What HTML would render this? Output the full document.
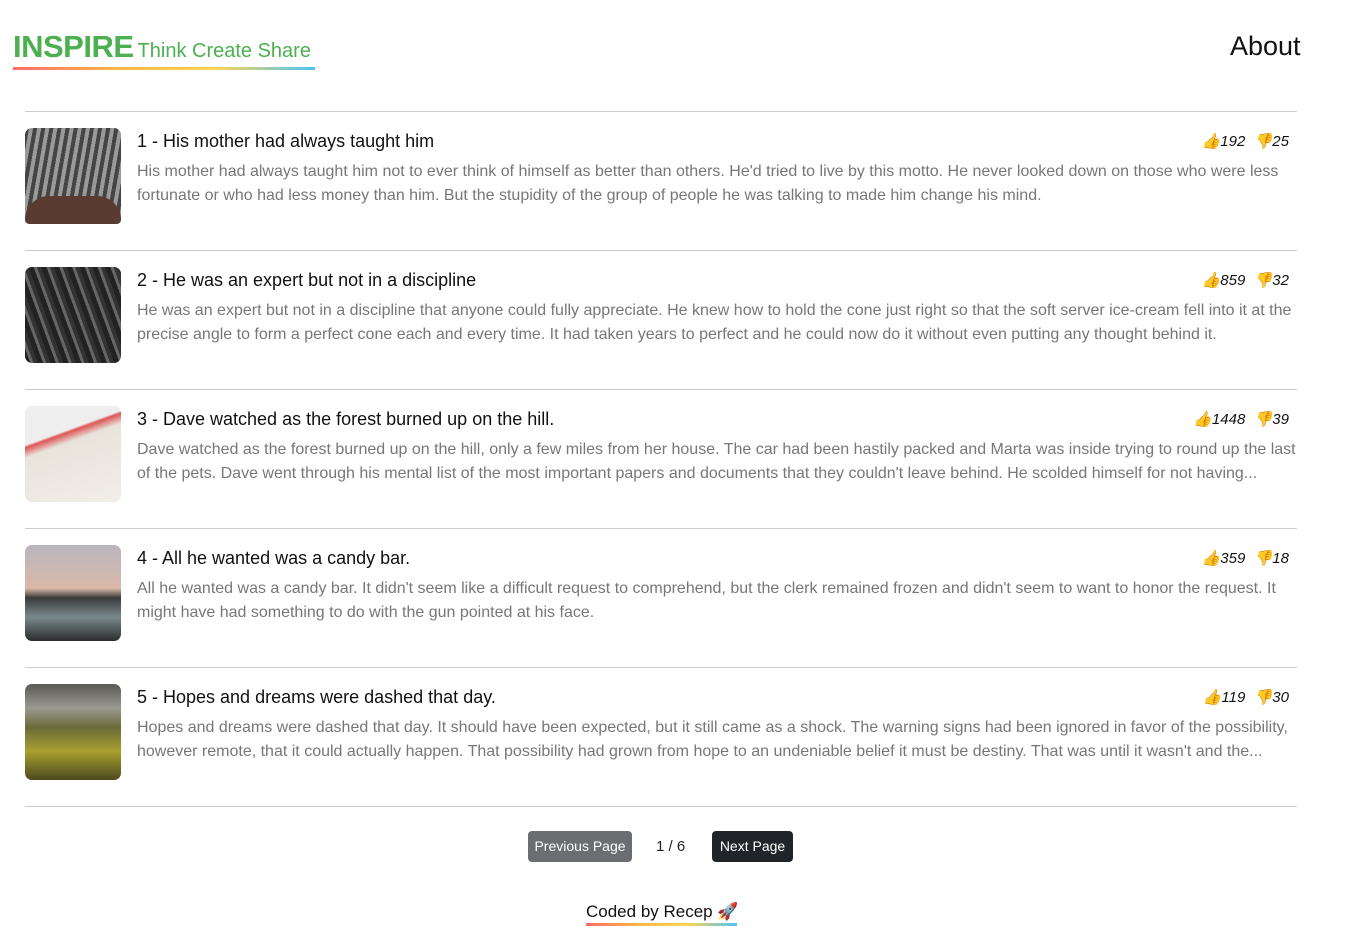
<!DOCTYPE html>
<html><head><meta charset="utf-8"><style>
*{box-sizing:border-box;margin:0;padding:0}
body{width:1348px;height:939px;background:#fff;font-family:"Liberation Sans",sans-serif;position:relative;overflow:hidden}
.logo{position:absolute;left:13px;top:29px;color:#4caf50;white-space:nowrap}
.logo b{font-size:31px;font-weight:bold;letter-spacing:-0.5px}
.logo span{font-size:20px;margin-left:4px}
.grad{background:linear-gradient(90deg,#ff6b6b,#ffb347,#ffd54f,#4fc3f7)}
.logo .grad{position:absolute;left:0;top:38px;width:302px;height:3px}
.about{position:absolute;left:1230px;top:31px;font-size:27px;color:#111}
.hr{position:absolute;left:25px;width:1272px;height:1px;background:#ccc}
.item{position:absolute;left:25px;width:1272px;height:96px}
.thumb{position:absolute;left:0;top:0;width:96px;height:96px;border-radius:7px}
.t{position:absolute;left:112px;top:3px;font-size:18px;color:#111}
.d{position:absolute;left:112px;top:32px;width:1160px;font-size:16px;line-height:24px;color:#777}
.v{position:absolute;right:8px;top:4px;font-size:15px;font-style:italic;color:#111}
.btn{position:absolute;top:831px;height:31px;font-size:14px;color:#fff;border-radius:4px;line-height:31px;text-align:center}
</style></head><body>
<div class="logo"><b>INSPIRE</b><span>Think Create Share</span><div class="grad"></div></div>
<div class="about">About</div>

<div class="hr" style="top:111px"></div>
<div class="item" style="top:128px"><div class="thumb" style="background:repeating-linear-gradient(100deg,#444 0 4px,#999 4px 8px);"><div style="position:absolute;left:0;bottom:0;width:96px;height:28px;background:#5a3b32;border-radius:40px 40px 7px 7px"></div></div>
<div class="t">1 - His mother had always taught him</div><div class="v">👍192 &nbsp;👎25</div>
<div class="d">His mother had always taught him not to ever think of himself as better than others. He'd tried to live by this motto. He never looked down on those who were less fortunate or who had less money than him. But the stupidity of the group of people he was talking to made him change his mind.</div></div>

<div class="hr" style="top:250px"></div>
<div class="item" style="top:267px"><div class="thumb" style="background:repeating-linear-gradient(70deg,#222 0 5px,#666 5px 8px,#333 8px 12px)"></div>
<div class="t">2 - He was an expert but not in a discipline</div><div class="v">👍859 &nbsp;👎32</div>
<div class="d">He was an expert but not in a discipline that anyone could fully appreciate. He knew how to hold the cone just right so that the soft server ice-cream fell into it at the precise angle to form a perfect cone each and every time. It had taken years to perfect and he could now do it without even putting any thought behind it.</div></div>

<div class="hr" style="top:389px"></div>
<div class="item" style="top:406px"><div class="thumb" style="background:linear-gradient(160deg,#eee 0 30%,#d55 32%,#e8e4dc 40%,#f2eee8 100%)"></div>
<div class="t">3 - Dave watched as the forest burned up on the hill.</div><div class="v">👍1448 &nbsp;👎39</div>
<div class="d">Dave watched as the forest burned up on the hill, only a few miles from her house. The car had been hastily packed and Marta was inside trying to round up the last of the pets. Dave went through his mental list of the most important papers and documents that they couldn't leave behind. He scolded himself for not having...</div></div>

<div class="hr" style="top:528px"></div>
<div class="item" style="top:545px"><div class="thumb" style="background:linear-gradient(180deg,#b9b6bf 0,#d9b9a8 45%,#3a3a3a 55%,#7a8a8c 75%,#2c2c2c 100%)"></div>
<div class="t">4 - All he wanted was a candy bar.</div><div class="v">👍359 &nbsp;👎18</div>
<div class="d">All he wanted was a candy bar. It didn't seem like a difficult request to comprehend, but the clerk remained frozen and didn't seem to want to honor the request. It might have had something to do with the gun pointed at his face.</div></div>

<div class="hr" style="top:667px"></div>
<div class="item" style="top:684px"><div class="thumb" style="background:linear-gradient(180deg,#5a5a55 0,#9a9a90 25%,#6b6a3a 45%,#a8a030 70%,#4c4a1e 100%)"></div>
<div class="t">5 - Hopes and dreams were dashed that day.</div><div class="v">👍119 &nbsp;👎30</div>
<div class="d">Hopes and dreams were dashed that day. It should have been expected, but it still came as a shock. The warning signs had been ignored in favor of the possibility, however remote, that it could actually happen. That possibility had grown from hope to an undeniable belief it must be destiny. That was until it wasn't and the...</div></div>

<div class="hr" style="top:806px"></div>
<div class="btn" style="left:528px;width:104px;background:#6c6d71">Previous Page</div>
<div style="position:absolute;left:656px;top:838px;font-size:15px;color:#222">1 / 6</div>
<div class="btn" style="left:712px;width:81px;background:#212529">Next Page</div>
<div style="position:absolute;left:586px;top:902px;font-size:17px;color:#111;white-space:nowrap">Coded by Recep 🚀</div>
<div class="grad" style="position:absolute;left:586px;top:923px;width:151px;height:3px"></div>
</body></html>
